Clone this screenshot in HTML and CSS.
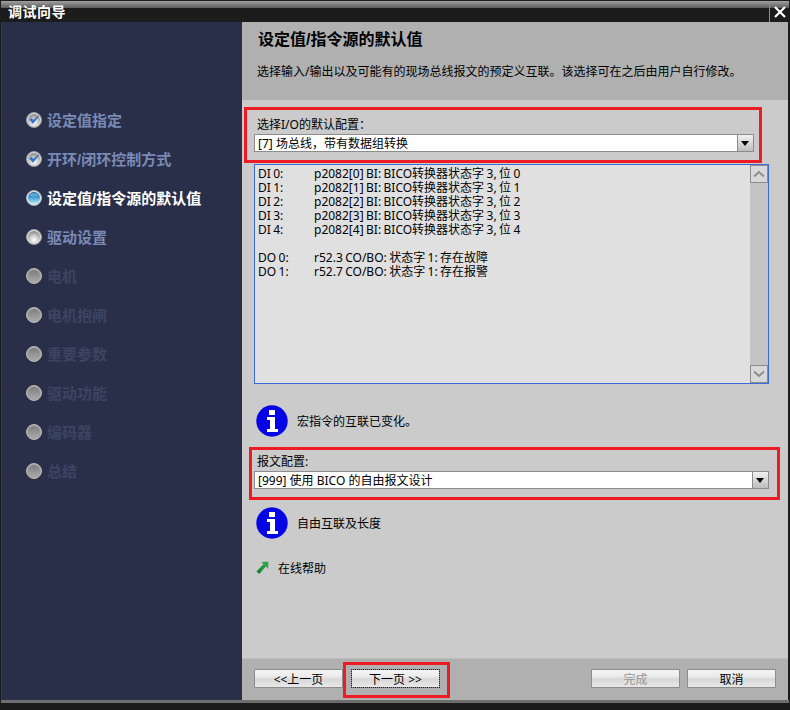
FILE: index.html
```html
<!DOCTYPE html>
<html lang="zh">
<head>
<meta charset="utf-8">
<title>调试向导</title>
<link rel="stylesheet" href="styles.css">
</head>
<body>
<svg class="defs" width="0" height="0" aria-hidden="true">
  <defs>
    <radialGradient id="ballWhite" cx="50%" cy="75%" r="70%"><stop offset="0" stop-color="#fff"/><stop offset=".55" stop-color="#c8c8c8"/><stop offset="1" stop-color="#8e8e8e"/></radialGradient>
    <linearGradient id="ballBlue" x1="0" y1="0" x2="0" y2="1"><stop offset="0" stop-color="#0f5f9f"/><stop offset=".45" stop-color="#3f9fd8"/><stop offset="1" stop-color="#bfeaf8"/></linearGradient>
    <linearGradient id="ballGrey" x1="0" y1="0" x2="0" y2="1"><stop offset="0" stop-color="#7e7e7e"/><stop offset="1" stop-color="#a8a8a8"/></linearGradient>
    <linearGradient id="arrowGreen" x1="0" y1="1" x2="1" y2="0"><stop offset="0" stop-color="#0e7a2c"/><stop offset="1" stop-color="#35b050"/></linearGradient>
    <symbol id="ball-done" viewBox="0 0 16 16">
      <circle cx="8" cy="8" r="7.5" fill="#d8d8d8" stroke="#9a9a9a"/>
      <circle cx="8" cy="8" r="6" fill="url(#ballWhite)"/>
      <path d="M3.800 7.600 7 11.500 12.600 4 7.200 8.200 5.600 6.400Z" fill="#2f74d0" stroke="#1f5cb0" stroke-width=".6"/>
    </symbol>
    <symbol id="ball-active" viewBox="0 0 16 16">
      <circle cx="8" cy="8" r="7.5" fill="#e4e4e4" stroke="#a8b0b8"/>
      <circle cx="8" cy="8" r="6" fill="url(#ballBlue)"/>
      <ellipse cx="8" cy="4.800" rx="4" ry="1.700" fill="#9cc4e0" opacity=".55"/>
    </symbol>
    <symbol id="ball-todo" viewBox="0 0 16 16">
      <circle cx="8" cy="8" r="7.5" fill="#dcdcdc" stroke="#9c9c9c"/>
      <circle cx="8" cy="8" r="6" fill="url(#ballWhite)"/>
    </symbol>
    <symbol id="ball-off" viewBox="0 0 16 16">
      <circle cx="8" cy="8" r="7.5" fill="#a4a4a4" stroke="#b8b8b8"/>
      <circle cx="8" cy="8" r="6" fill="url(#ballGrey)"/>
    </symbol>
    <symbol id="info" viewBox="0 0 32 32">
      <circle cx="16" cy="16" r="15.700" fill="#0505e6"/>
      <rect x="13" y="5" width="6" height="5" fill="#fff"/>
      <path d="M11 12h8v12h3v3H11v-3h3v-9h-3Z" fill="#fff"/>
    </symbol>
  </defs>
</svg>

<div class="window">
  <header class="titlebar">
    <span class="title">调试向导</span>
    <button class="close" aria-label="关闭">
      <svg width="14" height="14" viewBox="0 0 14 14"><path d="M2 2 12 12M12 2 2 12" stroke="#fff" stroke-width="2.2"/></svg>
    </button>
  </header>

  <div class="body">
    <nav class="steps">
      <div class="step done"><svg class="ball"><use href="#ball-done"/></svg>设定值指定</div>
      <div class="step done"><svg class="ball"><use href="#ball-done"/></svg>开环/闭环控制方式</div>
      <div class="step active"><svg class="ball"><use href="#ball-active"/></svg>设定值/指令源的默认值</div>
      <div class="step done"><svg class="ball"><use href="#ball-todo"/></svg>驱动设置</div>
      <div class="step off"><svg class="ball"><use href="#ball-off"/></svg>电机</div>
      <div class="step off"><svg class="ball"><use href="#ball-off"/></svg>电机抱闸</div>
      <div class="step off"><svg class="ball"><use href="#ball-off"/></svg>重要参数</div>
      <div class="step off"><svg class="ball"><use href="#ball-off"/></svg>驱动功能</div>
      <div class="step off"><svg class="ball"><use href="#ball-off"/></svg>编码器</div>
      <div class="step off"><svg class="ball"><use href="#ball-off"/></svg>总结</div>
    </nav>

    <main class="main">
      <section class="head">
        <h1>设定值/指令源的默认值</h1>
        <p>选择输入/输出以及可能有的现场总线报文的预定义互联。该选择可在之后由用户自行修改。</p>
      </section>

      <section class="form">
        <div class="field field-io">
          <label>选择I/O的默认配置：</label>
          <div class="combo combo-short"><span>[7] 场总线，带有数据组转换</span><i class="drop"></i></div>
        </div>

        <div class="panel">
          <div class="lines">
            <div class="line"><span>DI 0:</span><span>p2082[0] BI: BICO转换器状态字 3, 位 0</span></div>
            <div class="line"><span>DI 1:</span><span>p2082[1] BI: BICO转换器状态字 3, 位 1</span></div>
            <div class="line"><span>DI 2:</span><span>p2082[2] BI: BICO转换器状态字 3, 位 2</span></div>
            <div class="line"><span>DI 3:</span><span>p2082[3] BI: BICO转换器状态字 3, 位 3</span></div>
            <div class="line gap"><span>DI 4:</span><span>p2082[4] BI: BICO转换器状态字 3, 位 4</span></div>
            <div class="line"><span>DO 0:</span><span>r52.3 CO/BO: 状态字 1: 存在故障</span></div>
            <div class="line"><span>DO 1:</span><span>r52.7 CO/BO: 状态字 1: 存在报警</span></div>
          </div>
          <div class="scrollbar">
            <i class="sbtn"><svg width="12" height="8" viewBox="0 0 12 8"><path d="M1 6.500 6 2l5 4.500" fill="none" stroke="#8c8c8c" stroke-width="2"/></svg></i>
            <i class="sbtn"><svg width="12" height="8" viewBox="0 0 12 8"><path d="M1 1.500 6 6l5-4.500" fill="none" stroke="#8c8c8c" stroke-width="2"/></svg></i>
          </div>
        </div>

        <div class="note note-one"><svg class="info"><use href="#info"/></svg><span class="note-text">宏指令的互联已变化。</span></div>

        <div class="field field-tel">
          <label>报文配置:</label>
          <div class="combo"><span>[999] 使用 BICO 的自由报文设计</span><i class="drop"></i></div>
        </div>

        <div class="note note-two"><svg class="info"><use href="#info"/></svg><span class="note-text">自由互联及长度</span></div>

        <a class="help">
          <svg width="13" height="14" viewBox="0 0 14 14"><path d="M6 0.500 13.500 0 13 8 10.800 5 3.500 13.500 0.500 10.800 8 3Z" fill="url(#arrowGreen)"/></svg>
          <span class="note-text">在线帮助</span>
        </a>
      </section>

      <footer class="foot">
        <button class="btn">&lt;&lt;上一页</button>
        <button class="btn focus">下一页 &gt;&gt;</button>
        <span class="spacer"></span>
        <button class="btn disabled">完成</button>
        <button class="btn">取消</button>
      </footer>
    </main>
  </div>

  <i class="mark mark-io"></i>
  <i class="mark mark-tel"></i>
  <i class="mark mark-next"></i>
</div>
</body>
</html>
```
FILE: styles.css
```css
* { box-sizing: border-box; }
html, body { margin: 0; height: 100%; }
body {
  background: #1c1c1c;
  font: 12px/14px "Noto Sans", "Noto Sans CJK SC", sans-serif;
  color: #000;
  overflow: hidden;
}
.defs { position: absolute; }
.window {
  position: relative;
  width: 790px;
  height: 710px;
  display: flex;
  flex-direction: column;
  padding: 1px 1px 0 1px;
  background: #1c1c1c;
}

/* title bar */
.titlebar {
  height: 21px;
  flex: none;
  display: flex;
  justify-content: space-between;
  background: linear-gradient(#a0a0a0 0, #5c5c5c 7px, #1c1c1c 7px);
}
.title {
  color: #fff;
  font: bold 14px/20px "Noto Sans CJK SC", sans-serif;
  padding-left: 7px;
  letter-spacing: .5px;
}
.close {
  width: 20px;
  padding: 0;
  border: 0;
  border-left: 1px solid #8c8c8c;
  background: transparent;
  display: flex;
  align-items: center;
  justify-content: center;
}

/* layout */
.body {
  flex: none;
  height: 681px;
  display: flex;
  border-bottom: 3px solid #6e6e6e;
}
.steps {
  width: 241px;
  flex: none;
  background: #2a2f49;
  padding: 88px 0 0 24px;
  border-left: 1px solid #3a3a3a;
}
.step {
  height: 39px;
  display: flex;
  align-items: flex-start;
  gap: 5px;
  font: bold 15px/22px "Liberation Sans", "Noto Sans CJK SC", sans-serif;
  color: #7a8ab6;
}
.step.active { color: #fff; }
.step.off { color: #3c4463; }
.ball { width: 16px; height: 16px; flex: none; margin-top: 2px; }

.main {
  flex: 1;
  min-width: 0;
  display: flex;
  flex-direction: column;
  background: #cbcbcb;
  margin-right: 1px;
}
.head {
  height: 78px;
  flex: none;
  padding: 8px 0 0 16px;
  background: #b0b0b0;
}
.head h1 {
  margin: 0 0 13px;
  font: bold 16px/20px "Liberation Sans", "Noto Sans CJK SC", sans-serif;
}
.head p { margin: 0 0 0 -1px; line-height: 18px; }

.form {
  flex: 1;
  min-height: 0;
  padding: 17px 19px 0 12px;
  display: flex;
  flex-direction: column;
}
.field label { display: block; padding: 1px 0 0 3px; height: 17px; }
.combo {
  height: 18px;
  background: #fff;
  border: 1px solid #8c8c8c;
  display: flex;
  align-items: flex-end;
  justify-content: space-between;
  padding-left: 3px;
}
.combo-short { width: 500px; }
.drop {
  width: 16px;
  height: 16px;
  flex: none;
  background: linear-gradient(#f2f2f2, #bdbdbd);
  border-left: 1px solid #8c8c8c;
  position: relative;
}
.drop::after {
  content: "";
  position: absolute;
  left: 3px;
  top: 6px;
  border: 4px solid transparent;
  border-top: 5px solid #000;
  border-bottom: 0;
}
.panel {
  margin-top: 12px;
  height: 220px;
  flex: none;
  display: flex;
  justify-content: space-between;
  background: #e0e0e0;
  border: 1px solid #3a6bd9;
}
.lines { padding: 2px 0 0 3px; word-spacing: -.7px; }
.line { display: grid; grid-template-columns: 56px auto; height: 14px; }
.line.gap { margin-bottom: 14px; }
.scrollbar {
  width: 18px;
  flex: none;
  background: #c4c4c4;
  display: flex;
  flex-direction: column;
  justify-content: space-between;
}
.sbtn {
  height: 18px;
  background: #d8d8d8;
  border: 1px solid #8c8c8c;
  display: flex;
  align-items: center;
  justify-content: center;
}
.note { display: flex; align-items: center; gap: 9px; padding-left: 2px; }
.note-text { margin-top: 2px; }
.info { width: 32px; height: 32px; flex: none; }
.note-one { margin-top: 21px; }
.field-tel { margin-top: 17px; }
.note-two { margin-top: 18px; }
.help {
  display: flex;
  align-items: center;
  gap: 9px;
  margin-top: 22px;
  padding-left: 2px;
  height: 14px;
}
.foot {
  height: 42px;
  flex: none;
  display: flex;
  align-items: flex-start;
  padding: 10px 12px 0 12px;
  background: #b0b0b0;
  border-top: 1px solid #bcbcbc;
}
.spacer { flex: 1; }
.btn {
  width: 89px;
  height: 19px;
  padding: 1px 0 0;
  font: 12px/15px "Noto Sans", "Noto Sans CJK SC", sans-serif;
  color: #000;
  background: linear-gradient(#f4f4f4 0, #ececec 35%, #d8d8d8 55%, #e8e8e8 100%);
  border: 1px solid #8c8c8c;
  border-radius: 1px;
}
.btn + .btn { margin-left: 8px; }
.spacer + .btn { margin-left: 0; }
.btn.disabled + .btn { margin-left: 7px; }
.btn.focus { outline: 1px dotted #222; outline-offset: -1px; }
.btn.disabled { color: #969696; }

/* red annotation frames drawn on top of the dialog */
.mark { position: absolute; border: 3px solid #ed1c24; pointer-events: none; }
.mark-io { left: 244px; top: 107px; width: 518px; height: 56px; }
.mark-tel { left: 249px; top: 447px; width: 531px; height: 53px; }
.mark-next { left: 343px; top: 662px; width: 107px; height: 36px; }
```
